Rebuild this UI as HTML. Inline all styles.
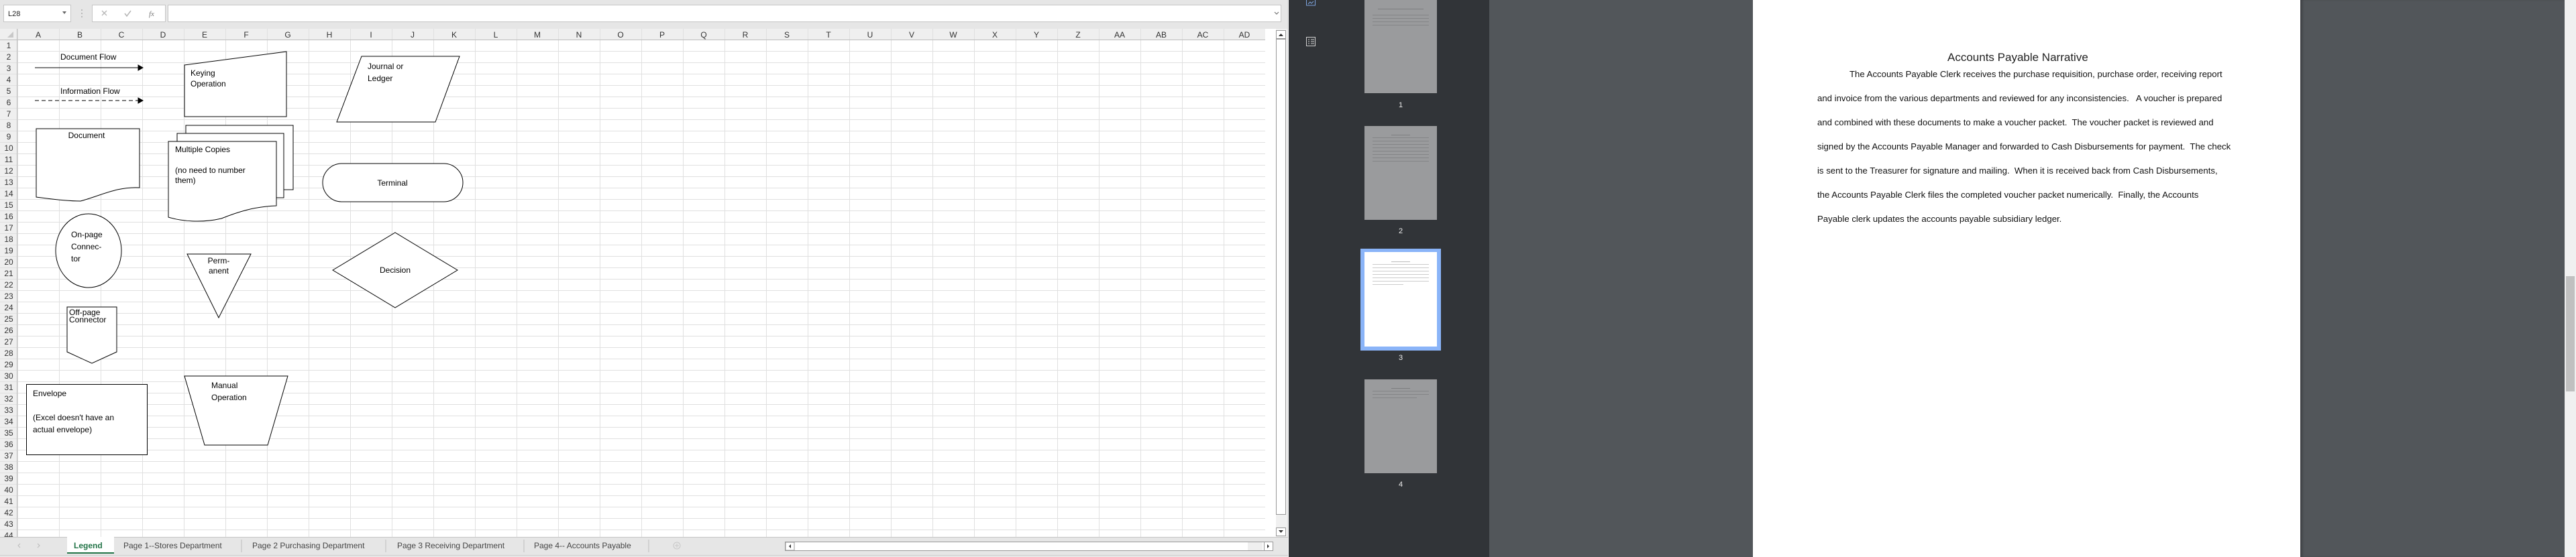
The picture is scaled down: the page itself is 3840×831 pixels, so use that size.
<!DOCTYPE html>
<html><head><meta charset="utf-8"><style>
*{margin:0;padding:0;box-sizing:border-box}
body{width:3840px;height:831px;overflow:hidden;position:relative;background:#fff;font-family:"Liberation Sans",sans-serif}
.abs{position:absolute}
.pg div{white-space:nowrap}
</style></head><body>
<svg class="abs" style="left:0;top:0" width="1920" height="831" viewBox="0 0 1920 831" font-family="Liberation Sans, sans-serif">
<rect width="1920" height="831" fill="#e6e6e6"/>
<rect x="5.5" y="7.5" width="100" height="25" fill="#fff" stroke="#c6c6c6"/>
<text x="12" y="24" font-size="11" fill="#222">L28</text>
<path d="M93 17l3 4 3-4z" fill="#666"/>
<circle cx="122" cy="15" r="0.9" fill="#999"/><circle cx="122" cy="20" r="0.9" fill="#999"/><circle cx="122" cy="25" r="0.9" fill="#999"/>
<rect x="137.5" y="7.5" width="109" height="25" fill="#fff" stroke="#c6c6c6"/>
<path d="M152 16l7 7M159 16l-7 7" stroke="#b5b5b5" stroke-width="1.3"/>
<path d="M186 20l3 4 6-8" stroke="#b5b5b5" stroke-width="1.5" fill="none"/>
<text x="222" y="24" font-size="11" font-style="italic" font-family="Liberation Serif, serif" fill="#777">fx</text>
<rect x="250.5" y="7.5" width="1659" height="25" fill="#fff" stroke="#c6c6c6"/>
<path d="M1900 18l3 3 3-3" stroke="#666" fill="none"/>
<rect x="0" y="43" width="1902" height="758" fill="#fff"/>
<rect x="0" y="43" width="1902" height="16" fill="#efefef"/>
<rect x="0" y="43" width="26" height="758" fill="#efefef"/>
<g id="grid" stroke="#e0e0e0" stroke-width="1"></g>
<path d="M20 47v9h-9z" fill="#c8c8c8"/>
<g id="labels" font-size="12" fill="#333"></g>
<line x1="0" y1="59.5" x2="1902" y2="59.5" stroke="#bdbdbd"/>
<line x1="25.5" y1="43" x2="25.5" y2="801" stroke="#bdbdbd"/>
<rect x="1886" y="43" width="34" height="758" fill="#fff"/>
<rect x="1902" y="43" width="18" height="758" fill="#f0f0f0"/>
<rect x="1902.5" y="45.5" width="14" height="12" fill="#fff" stroke="#999"/>
<path d="M1906 54l3.5-4 3.5 4z" fill="#333"/>
<rect x="1902.5" y="58.5" width="14" height="709" fill="#fff" stroke="#999"/>
<rect x="1902.5" y="787.5" width="14" height="12" fill="#fff" stroke="#999"/>
<path d="M1906 791l3.5 4 3.5-4z" fill="#333"/>
<line x1="1920" y1="0" x2="1920" y2="831" stroke="#cfcfcf"/>

<g stroke="#000" stroke-width="1" fill="#fff" font-size="12">
<text x="90" y="89" stroke="none" fill="#000">Document Flow</text>
<line x1="52" y1="101" x2="208" y2="101"/><path d="M206 97l7 4-7 4z" fill="#000"/>
<text x="90" y="140" stroke="none" fill="#000">Information Flow</text>
<line x1="52" y1="150" x2="208" y2="150" stroke-dasharray="6 4"/><path d="M206 146l7 4-7 4z" fill="#000"/>
<path d="M275 97L427 77V174H275Z"/>
<text x="284" y="113" stroke="none" fill="#000">Keying</text>
<text x="284" y="129" stroke="none" fill="#000">Operation</text>
<path d="M539 84H685L649 182H502Z"/>
<text x="548" y="103" stroke="none" fill="#000">Journal or</text>
<text x="548" y="121" stroke="none" fill="#000">Ledger</text>
<path d="M54 192H208V280C175 278 150 292 120 300C95 300 70 296 54 294Z"/>
<text x="129" y="206" stroke="none" fill="#000" text-anchor="middle">Document</text>
<path d="M277 187H437V283H277Z"/>
<path d="M264 199H423V295H264Z"/>
<path d="M251 211H412V307C380 308 355 316 330 326C300 333 270 330 251 324Z"/>
<text x="261" y="227" stroke="none" fill="#000">Multiple Copies</text>
<text x="261" y="258" stroke="none" fill="#000">(no need to number</text>
<text x="261" y="273" stroke="none" fill="#000">them)</text>
<rect x="481" y="244" width="209" height="57" rx="28.5"/>
<text x="585" y="277" stroke="none" fill="#000" text-anchor="middle">Terminal</text>
<ellipse cx="132" cy="374" rx="49" ry="55"/>
<text x="106" y="354" stroke="none" fill="#000">On-page</text>
<text x="106" y="372" stroke="none" fill="#000">Connec-</text>
<text x="106" y="390" stroke="none" fill="#000">tor</text>
<path d="M279 379H374L326 474Z"/>
<text x="326" y="393" stroke="none" fill="#000" text-anchor="middle">Perm-</text>
<text x="326" y="408" stroke="none" fill="#000" text-anchor="middle">anent</text>
<path d="M496 403L589 347L682 403L589 459Z"/>
<text x="589" y="407" stroke="none" fill="#000" text-anchor="middle">Decision</text>
<path d="M100 458H174V525L137 542L100 525Z"/>
<text x="103" y="470" stroke="none" fill="#000">Off-page</text>
<text x="103" y="481" stroke="none" fill="#000">Connector</text>
<rect x="39.5" y="573.5" width="180" height="105"/>
<text x="49" y="591" stroke="none" fill="#000">Envelope</text>
<text x="49" y="627" stroke="none" fill="#000">(Excel doesn't have an</text>
<text x="49" y="645" stroke="none" fill="#000">actual envelope)</text>
<path d="M275 561H429L399 664H305Z"/>
<text x="315" y="579" stroke="none" fill="#000">Manual</text>
<text x="315" y="597" stroke="none" fill="#000">Operation</text>
</g>

<rect x="0" y="801" width="1920" height="30" fill="#e6e6e6"/>
<line x1="0" y1="801.5" x2="1920" y2="801.5" stroke="#c6c6c6"/>
<path d="M30 811l-3 3 3 3M56 811l3 3-3 3" stroke="#bbb" fill="none"/>
<rect x="100" y="801" width="70" height="25" fill="#fff"/>
<rect x="100" y="824" width="70" height="2" fill="#217346"/>
<text x="110" y="818" font-size="12" font-weight="bold" fill="#217346">Legend</text>
<g font-size="12" fill="#444">
<text x="184" y="818">Page 1--Stores Department</text>
<text x="376" y="818">Page 2 Purchasing Department</text>
<text x="592" y="818">Page 3 Receiving Department</text>
<text x="796" y="818">Page 4-- Accounts Payable</text>
</g>
<g stroke="#bfbfbf"><line x1="360" y1="805" x2="360" y2="824"/><line x1="575" y1="805" x2="575" y2="824"/><line x1="781" y1="805" x2="781" y2="824"/><line x1="967" y1="805" x2="967" y2="824"/></g>
<circle cx="1009" cy="814" r="5" fill="none" stroke="#c8c8c8"/><path d="M1006 814h6M1009 811v6" stroke="#c8c8c8"/>
<rect x="1170.5" y="808.5" width="727" height="13" fill="#fff" stroke="#999"/>
<rect x="1171" y="809" width="13" height="12" fill="#fff" stroke="#999"/>
<path d="M1179 812l-3 3 3 3z" fill="#333"/>
<rect x="1860" y="809" width="22" height="12" fill="#efefef"/>
<rect x="1884.5" y="808.5" width="13" height="13" fill="#fff" stroke="#999"/>
<path d="M1889 812l3 3-3 3z" fill="#333"/>
<line x1="0" y1="828.5" x2="1920" y2="828.5" stroke="#cfcfcf"/>
</svg>

<div class="abs" style="left:1921px;top:0;width:299px;height:831px;background:#313438"></div>
<svg class="abs" style="left:1944px;top:0" width="22" height="70">
<rect x="3.5" y="-2" width="13" height="10" fill="none" stroke="#7ea5e0"/>
<path d="M6 6l3-3 2 2 3-3" stroke="#7ea5e0" fill="none"/>
<rect x="3.5" y="57.5" width="13" height="13" fill="none" stroke="#d0d0d0" transform="translate(0,-2)"/>
<path d="M6 59h2M10 59h5M6 62h2M10 62h5M6 65h2M10 65h5" stroke="#d0d0d0"/>
</svg>
<div class="abs" style="left:2034px;top:0;width:108px;height:139px;background:#9a9b9d">
 <div style="margin:13px 20px 0;height:1px;background:#7d7e80"></div>
 <div style="margin:8px 12px 0;height:1px;background:#848587"></div><div style="margin:4px 12px 0;height:1px;background:#848587"></div><div style="margin:4px 12px 0;height:1px;background:#848587"></div><div style="margin:4px 12px 0;height:1px;background:#848587"></div>
</div>
<div class="abs" style="left:2034px;top:188px;width:108px;height:140px;background:#9a9b9d">
 <div style="margin:13px 40px 0;height:1px;background:#7d7e80"></div>
 <div style="margin:3px 12px 0;height:1px;background:#848587"></div><div style="margin:4px 12px 0;height:1px;background:#848587"></div><div style="margin:4px 12px 0;height:1px;background:#848587"></div><div style="margin:4px 12px 0;height:1px;background:#848587"></div><div style="margin:4px 12px 0;height:1px;background:#848587"></div><div style="margin:4px 12px 0;height:1px;background:#848587"></div><div style="margin:4px 12px 0;height:1px;background:#848587"></div><div style="margin:4px 12px 0;height:1px;background:#848587"></div>
</div>
<div class="abs" style="left:2028px;top:371px;width:120px;height:152px;background:#8ab4f8;padding:5px 6px">
 <div style="background:#fff;width:108px;height:141px;padding-top:14px">
  <div style="margin:0 40px;height:1px;background:#bbb"></div>
  <div style="margin:3px 12px 0;height:1px;background:#ccc"></div><div style="margin:4px 12px 0;height:1px;background:#ccc"></div><div style="margin:4px 12px 0;height:1px;background:#ccc"></div><div style="margin:4px 12px 0;height:1px;background:#ccc"></div><div style="margin:4px 12px 0;height:1px;background:#ccc"></div><div style="margin:4px 12px 0;height:1px;background:#ccc"></div><div style="margin:4px 50px 0 12px;height:1px;background:#ccc"></div>
 </div>
</div>
<div class="abs" style="left:2034px;top:566px;width:108px;height:140px;background:#9a9b9d">
 <div style="margin:13px 40px 0;height:1px;background:#7d7e80"></div>
 <div style="margin:3px 12px 0;height:1px;background:#848587"></div><div style="margin:4px 12px 0;height:1px;background:#848587"></div><div style="margin:4px 30px 0 12px;height:1px;background:#848587"></div>
</div>
<div class="abs" style="left:2078px;top:151px;width:20px;text-align:center;color:#eee;font-size:11px">1</div>
<div class="abs" style="left:2078px;top:339px;width:20px;text-align:center;color:#eee;font-size:11px">2</div>
<div class="abs" style="left:2078px;top:528px;width:20px;text-align:center;color:#eee;font-size:11px">3</div>
<div class="abs" style="left:2078px;top:717px;width:20px;text-align:center;color:#eee;font-size:11px">4</div>
<div class="abs" style="left:2220px;top:0;width:393px;height:831px;background:#52565a"></div>
<div class="abs" style="left:2613px;top:0;width:816px;height:831px;background:#fff"></div>
<div class="abs" style="left:3429px;top:0;width:394px;height:831px;background:#52565a;box-shadow:inset 4px 0 3px -1px #3f4246"></div>
<div class="abs" style="left:3823px;top:0;width:17px;height:831px;background:#f0f0f0"></div>
<div class="abs" style="left:3825px;top:412px;width:13px;height:172px;background:#c0c0c0"></div>
<div class="abs" style="left:2903px;top:76px;font-size:17px;color:#222;white-space:nowrap">Accounts Payable Narrative</div>
<div class="abs pg" style="left:2757px;top:103px;font-size:13.2px;color:#111;line-height:16px">
<div>The Accounts Payable Clerk receives the purchase requisition, purchase order, receiving report</div>
</div>
<div class="abs pg" style="left:2709px;top:129px;font-size:13.2px;color:#111;line-height:35.9px">
<div>and invoice from the various departments and reviewed for any inconsistencies.&nbsp;&nbsp; A voucher is prepared</div>
<div>and combined with these documents to make a voucher packet.&nbsp; The voucher packet is reviewed and</div>
<div>signed by the Accounts Payable Manager and forwarded to Cash Disbursements for payment.&nbsp; The check</div>
<div>is sent to the Treasurer for signature and mailing.&nbsp; When it is received back from Cash Disbursements,</div>
<div>the Accounts Payable Clerk files the completed voucher packet numerically.&nbsp; Finally, the Accounts</div>
<div>Payable clerk updates the accounts payable subsidiary ledger.</div>
</div>
<script>
(function(){
var ns="http://www.w3.org/2000/svg",g=document.getElementById("grid"),L=document.getElementById("labels");
function el(p,n,a,t){var e=document.createElementNS(ns,n);for(var k in a)e.setAttribute(k,a[k]);if(t)e.textContent=t;p.appendChild(e);}
var cols="A B C D E F G H I J K L M N O P Q R S T U V W X Y Z AA AB AC AD".split(" ");
for(var i=0;i<=30;i++){var x=26+i*62+0.5;el(g,"line",{x1:x,y1:43,x2:x,y2:801});
 if(i<30)el(L,"text",{x:26+i*62+31,y:56,"text-anchor":"middle"},cols[i]);}
for(var r=0;r<44;r++){var y=59+(r+1)*17+0.5;el(g,"line",{x1:0,y1:y,x2:1886,y2:y});
 el(L,"text",{x:13,y:59+r*17+13,"text-anchor":"middle"},String(r+1));}
})();
</script>
</body></html>
